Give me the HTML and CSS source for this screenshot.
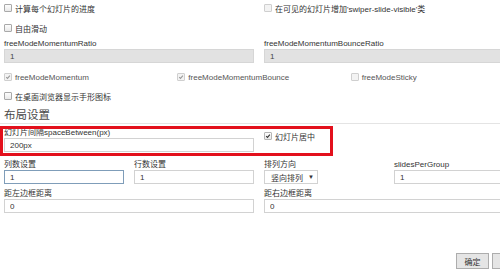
FILE: index.html
```
<!DOCTYPE html>
<html lang="zh">
<head>
<meta charset="utf-8">
<title>Swiper 设置</title>
<link rel="stylesheet" href="styles.css">
</head>
<body>
<div class="page">
  <div class="row two">
    <div class="cell"><label class="check"><span class="cb"></span>计算每个幻灯片的进度</label></div>
    <div class="cell"><label class="check off"><span class="cb"></span>在可见的幻灯片增加'swiper-slide-visible'类</label></div>
  </div>
  <div class="row two gap4">
    <div class="cell"><label class="check"><span class="cb"></span>自由滑动</label></div>
  </div>
  <div class="row two gap2">
    <div class="cell field"><span class="lbl">freeModeMomentumRatio</span><input class="inp" value="1" disabled></div>
    <div class="cell field"><span class="lbl">freeModeMomentumBounceRatio</span><input class="inp" value="1" disabled></div>
  </div>
  <div class="row three gap6">
    <div class="cell"><label class="check off gray"><span class="cb on"><svg viewBox="0 0 8 8"><path d="M1.6 4.2 L3.3 5.9 L6.5 2.1"/></svg></span>freeModeMomentum</label></div>
    <div class="cell"><label class="check off gray"><span class="cb on"><svg viewBox="0 0 8 8"><path d="M1.6 4.2 L3.3 5.9 L6.5 2.1"/></svg></span>freeModeMomentumBounce</label></div>
    <div class="cell"><label class="check off gray"><span class="cb"></span>freeModeSticky</label></div>
  </div>
  <div class="row two gap3">
    <div class="cell"><label class="check"><span class="cb"></span>在桌面浏览器显示手形图标</label></div>
  </div>
  <h3 class="section">布局设置</h3>
  <div class="row two gap3 marked">
    <div class="cell field"><span class="lbl">幻灯片间隔spaceBetween(px)</span><input class="inp" value="200px"></div>
    <div class="cell"><label class="check pad1"><span class="cb on small"><svg viewBox="0 0 8 8"><path d="M1.6 4.2 L3.3 5.9 L6.5 2.1"/></svg></span>幻灯片居中</label></div>
    <div class="highlight"></div>
  </div>
  <div class="row four gap7">
    <div class="cell field"><span class="lbl">列数设置</span><input class="inp focus" value="1"></div>
    <div class="cell field"><span class="lbl">行数设置</span><input class="inp" value="1"></div>
    <div class="cell field"><span class="lbl">排列方向</span><span class="sel">竖向排列<span class="arrow">▼</span></span></div>
    <div class="cell field"><span class="lbl">slidesPerGroup</span><input class="inp" value="1"></div>
  </div>
  <div class="row two gap4">
    <div class="cell field"><span class="lbl">距左边框距离</span><input class="inp" value="0"></div>
    <div class="cell field"><span class="lbl">距右边框距离</span><input class="inp" value="0"></div>
  </div>
  <div class="actions">
    <button class="btn">确定</button>
    <button class="btn wide">取消</button>
  </div>
</div>
</body>
</html>
```
FILE: styles.css
```
html, body {
  margin: 0;
  padding: 0;
  background: #fff;
  overflow: hidden;
}
body {
  font-family: "Liberation Sans", "Noto Sans CJK SC", sans-serif;
  font-size: 8px;
  color: #333;
}
.page {
  width: 540px;
}
.row {
  display: grid;
  width: 520px;
}
.two { grid-template-columns: 1fr 1fr; }
.three { grid-template-columns: 1fr 1fr 1fr; }
.four { grid-template-columns: 1fr 1fr 1fr 1fr; }
.gap2 { margin-top: 2px; }
.gap3 { margin-top: 3px; }
.gap4 { margin-top: 4px; }
.gap6 { margin-top: 6px; }
.gap7 { margin-top: 7px; }
.cell {
  padding: 0 6px 0 4px;
  min-width: 0;
}
.check {
  display: flex;
  align-items: center;
  gap: 2px;
  height: 16px;
  white-space: nowrap;
  color: #333;
}
.check.pad1 { margin-top: 1px; }
.check.gray { color: #555; }
.cb {
  width: 8px;
  height: 8px;
  box-sizing: border-box;
  border: 1px solid #a9a9a9;
  border-radius: 1px;
  background: linear-gradient(#fdfdfd, #e9e9e9);
  display: inline-flex;
  flex: none;
  margin-right: 1px;
}
.cb.small {
  border-color: #b5b5b5;
}
.off .cb {
  border-color: #cfcfcf;
  background: #f3f3f3;
}
.cb svg {
  width: 6px;
  height: 6px;
}
.cb svg path {
  fill: none;
  stroke: #333;
  stroke-width: 1.4;
}
.off .cb svg path { stroke: #999; }
.field .lbl {
  display: block;
  height: 11px;
  line-height: 11px;
  white-space: nowrap;
  color: #333;
}
.inp {
  display: block;
  box-sizing: border-box;
  width: 100%;
  height: 14px;
  margin: 0;
  padding: 0 5px;
  border: 1px solid #d2d2d2;
  background: #fff;
  font-family: "Liberation Sans", "Noto Sans CJK SC", sans-serif;
  font-size: 8px;
  color: #333;
  outline: none;
}
.inp:disabled {
  background: #e2e2e2;
  border-color: #d6d6d6;
  color: #444;
}
.inp.focus {
  border-color: #7f9db9;
}
.sel {
  display: flex;
  align-items: center;
  box-sizing: border-box;
  width: 54px;
  height: 14px;
  border: 1px solid #d2d2d2;
  padding: 0 3px 0 6px;
  color: #333;
  white-space: nowrap;
}
.sel .arrow {
  margin-left: auto;
  font-size: 6px;
  color: #333;
}
.section {
  margin: 4px 0 0;
  padding: 0 0 1px 4px;
  font-size: 11.5px;
  line-height: 14px;
  font-weight: normal;
  color: #4a4a4a;
  border-bottom: 1px solid #e4e4e4;
  width: 516px;
}
.marked {
  position: relative;
}
.highlight {
  position: absolute;
  left: 0;
  top: -1px;
  width: 333px;
  height: 30px;
  box-sizing: border-box;
  border: 3px solid #e3101c;
  pointer-events: none;
}
.actions {
  display: flex;
  justify-content: flex-start;
  gap: 3px;
  margin-top: 40px;
  padding-left: 456px;
}
.btn {
  box-sizing: border-box;
  width: 33px;
  height: 16px;
  margin: 0;
  padding: 0;
  border: 1px solid #adadad;
  background: #e5e5e5;
  font-family: "Liberation Sans", "Noto Sans CJK SC", sans-serif;
  font-size: 8px;
  color: #333;
  flex: none;
}
.btn.wide {
  width: 44px;
}
```
